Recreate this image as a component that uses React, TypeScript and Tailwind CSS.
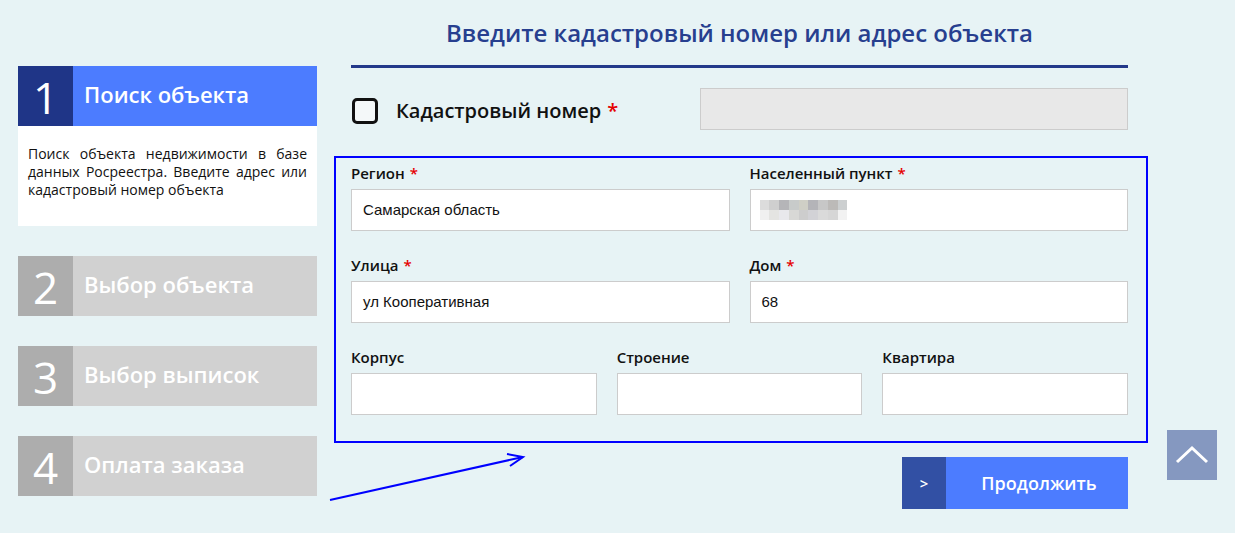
import React from "react";

const steps = [
  { n: "2", title: "Выбор объекта" },
  { n: "3", title: "Выбор выписок" },
  { n: "4", title: "Оплата заказа" },
];

function Label({ text, required }: { text: string; required?: boolean }) {
  return (
    <div className="h-[22px] text-[15px] font-semibold leading-[22px] text-[#111]">
      {text}
      {required && <span className="ml-[5px] text-[#e50000]">*</span>}
    </div>
  );
}

function Field({ label, required, value, blurred }: { label: string; required?: boolean; value?: string; blurred?: boolean }) {
  return (
    <div className="flex flex-col">
      <Label text={label} required={required} />
      <div className="mt-[5px] flex h-[42px] items-center border border-[#cccccc] bg-white px-[11px] font-['Liberation_Sans',sans-serif] text-[15px] text-[#111]">
        {value}
        {blurred && (
          <div className="grid grid-cols-9 grid-rows-2 w-[88px] h-[20px] -ml-[2px]">
            {["#dcdcdc", "#cfcfcf", "#b5b5b8", "#c8cbca", "#cfcfc6", "#b4b4b8", "#c7c7c7", "#bcbab8", "#cccfd0",
              "#f0f0f0", "#e4e4e2", "#e8e8ec", "#d8d8d6", "#cdcdcd", "#d2d2d6", "#dadada", "#d6d6d6", "#f2f2f2"].map((c, i) => (
              <div key={i} style={{ backgroundColor: c }} />
            ))}
          </div>
        )}
      </div>
    </div>
  );
}

export default function App() {
  return (
    <div className="relative h-[533px] w-[1235px] overflow-hidden bg-[#e7f3f5] font-['Open_Sans',sans-serif]">
      <div className="flex">
        {/* steps */}
        <div className="ml-[18px] mt-[66px] flex w-[299px] flex-col">
          <div className="flex h-[60px]">
            <div className="flex w-[55px] items-center justify-center bg-[#1f3587] pt-[1px] text-[44px] text-white">1</div>
            <div className="flex flex-1 items-center bg-[#4c7cff] pb-[4px] pl-[11px] text-[22px] font-semibold text-white">Поиск объекта</div>
          </div>
          <div className="h-[100px] bg-white px-[10px] pt-[19px] text-justify text-[14px] leading-[18px] text-[#111]">
            Поиск объекта недвижимости в базе данных Росреестра. Введите адрес или кадастровый номер объекта
          </div>
          {steps.map((s) => (
            <div key={s.n} className="mt-[30px] flex h-[60px]">
              <div className="flex w-[55px] items-center justify-center bg-[#adadad] pt-[1px] text-[44px] text-white">{s.n}</div>
              <div className="flex flex-1 items-center bg-[#d1d1d1] pb-[4px] pl-[11px] text-[22px] font-semibold text-white">{s.title}</div>
            </div>
          ))}
        </div>

        {/* main */}
        <div className="ml-[34px] flex w-[777px] flex-col">
          <h1 className="pt-[17px] text-center text-[24px] font-semibold leading-[32px] text-[#273f8f]">
            Введите кадастровый номер или адрес объекта
          </h1>
          <div className="mt-[16px] h-[3px] bg-[#23398a]" />

          <div className="mt-[20px] flex h-[42px] items-start">
            <div className="mt-[10px] flex items-center">
              <div className="ml-[1px] h-[26px] w-[26px] rounded-[5px] border-[3px] border-[#111] bg-[#f4f8f9]" />
              <div className="ml-[18px] text-[20px] font-semibold leading-[26px] text-[#111]">
                Кадастровый номер<span className="ml-[6px] text-[#e50000]">*</span>
              </div>
            </div>
            <div className="ml-auto h-[42px] w-[428px] border border-[#cccccc] bg-[#e8e8e8]" />
          </div>

          <div className="-ml-[17px] -mr-[20px] mt-[26px] border-2 border-[#0000ff] pb-[26px] pl-[15px] pr-[18px] pt-[4px]">
            <div className="grid grid-cols-2 gap-x-[20px] gap-y-[23px]">
              <Field label="Регион" required value="Самарская область" />
              <Field label="Населенный пункт" required blurred />
              <Field label="Улица" required value="ул Кооперативная" />
              <Field label="Дом" required value="68" />
            </div>
            <div className="mt-[23px] grid grid-cols-3 gap-x-[20px]">
              <Field label="Корпус" />
              <Field label="Строение" />
              <Field label="Квартира" />
            </div>
          </div>

          <div className="mt-[14px] flex justify-end">
            <button className="flex h-[52px] w-[226px] text-white">
              <span className="flex h-full w-[44px] items-center justify-center bg-[#3250a4] text-[15px] font-semibold">&gt;</span>
              <span className="flex h-full flex-1 items-center justify-center bg-[#4c7cff] pl-[4px] text-[18px] font-semibold">Продолжить</span>
            </button>
          </div>
        </div>
      </div>

      {/* scroll to top */}
      <div className="absolute left-[1167px] top-[430px] flex h-[50px] w-[50px] items-center justify-center bg-[#8598c0]">
        <svg width="34" height="20" viewBox="0 0 34 20" fill="none">
          <path d="M2 17 L17 3 L32 17" stroke="white" strokeWidth="3" />
        </svg>
      </div>

      {/* annotation arrow */}
      <svg className="absolute left-0 top-0" width="1235" height="533" viewBox="0 0 1235 533" fill="none">
        <path d="M330 500 L523 457" stroke="#0000ff" strokeWidth="2" />
        <path d="M507 454 L523 457 L510 466" stroke="#0000ff" strokeWidth="2" />
      </svg>
    </div>
  );
}
